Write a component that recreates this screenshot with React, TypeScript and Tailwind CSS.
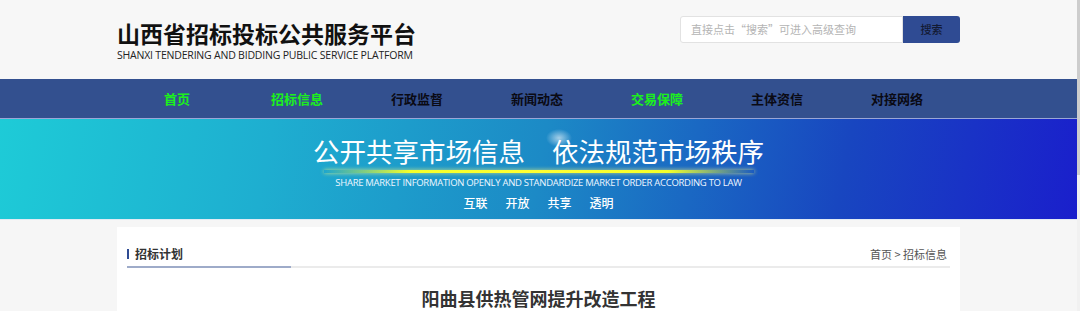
const navItems = [
  { label: '首页', active: true },
  { label: '招标信息', active: true },
  { label: '行政监督', active: false },
  { label: '新闻动态', active: false },
  { label: '交易保障', active: true },
  { label: '主体资信', active: false },
  { label: '对接网络', active: false },
];

const cjk = "font-['Noto_Sans_CJK_SC','Noto_Sans',sans-serif]";

export default function App() {
  return (
    <div className={`flex w-[1080px] h-[311px] overflow-hidden bg-[#f6f6f6] ${cjk}`}>
      <div className="flex-1 flex flex-col min-h-0">
        {/* header */}
        <header className="shrink-0 h-[79px] bg-[#f7f7f7]">
          <div className="w-[843px] mx-auto flex items-start justify-between">
            <div className="pt-[18px]">
              <h1 className="text-[23px] leading-[30px] font-bold text-[#111]">山西省招标投标公共服务平台</h1>
              <p className="text-[10.5px] leading-[12px] mt-[1px] text-[#222] font-['Open_Sans',sans-serif] tracking-[-0.2px] whitespace-nowrap">
                SHANXI TENDERING AND BIDDING PUBLIC SERVICE PLATFORM
              </p>
            </div>
            <div className="flex mt-[16px] h-[27px]">
              <div className="w-[223px] bg-white border border-[#e2e2e2] rounded-l-[3px] flex items-center pl-[10px] text-[11px] text-[#b4b4b4]">
                直接点击“搜索”可进入高级查询
              </div>
              <button className="w-[57px] bg-[#2f4b93] rounded-r-[3px] text-[11px] text-[#131a33] font-medium">搜索</button>
            </div>
          </div>
        </header>

        {/* nav */}
        <nav className="shrink-0 h-[40px] bg-[#33508f] border-b border-[#9aa6d6]">
          <div className="w-[843px] mx-auto flex h-full items-center">
            {navItems.map((n) => (
              <a
                key={n.label}
                className={`w-[120px] text-center text-[13px] font-bold ${n.active ? 'text-[#1cf01c]' : 'text-[#0a0a14]'}`}
              >
                {n.label}
              </a>
            ))}
          </div>
        </nav>

        {/* banner */}
        <section className="shrink-0 relative h-[101px] bg-[linear-gradient(100deg,#1ecbd7_0%,#1eaed0_25%,#1c8ac6_50%,#1846c0_78%,#1a1fcc_100%)] border-b border-[#e3ebf4] overflow-hidden">
          <div className="absolute left-[546px] top-[10px] w-[26px] h-[18px] rounded-full bg-[radial-gradient(closest-side,rgba(255,255,255,0.6),rgba(255,255,255,0))]" />
          <div className="relative flex flex-col items-center pt-[16px] text-white">
            <div className="text-[26.5px] leading-[32px] font-normal whitespace-nowrap">
              公开共享市场信息<span className="inline-block w-[27px]" />依法规范市场秩序
            </div>
            <div className="mt-[3px] h-[3px] w-[430px] bg-[linear-gradient(90deg,rgba(255,255,0,0)_0%,#f4ff2a_20%,#ffff33_50%,#f4ff2a_80%,rgba(255,255,0,0)_100%)] shadow-[0_0_4px_rgba(255,255,120,0.8)]" />
            <div className="mt-[4px] text-[9.5px] leading-[11px] font-['Open_Sans',sans-serif] tracking-[-0.3px] whitespace-nowrap text-[#eef6ff]">
              SHARE MARKET INFORMATION OPENLY AND STANDARDIZE MARKET ORDER ACCORDING TO LAW
            </div>
            <div className="mt-[8px] flex gap-[18px] text-[12px] leading-[14px] font-medium">
              <span>互联</span>
              <span>开放</span>
              <span>共享</span>
              <span>透明</span>
            </div>
          </div>
        </section>

        {/* content */}
        <main className="flex-1 min-h-0 pt-[7px]">
          <div className="w-[843px] mx-auto bg-white h-[200px] px-[10px]">
            <div className="flex items-end justify-between pt-[14px] h-[35px]">
              <div className="flex items-center gap-[4px]">
                <span className="w-[2px] h-[10px] bg-[#2f4b93]" />
                <span className="text-[12px] font-bold text-[#333] leading-[16px] ml-[2px]">招标计划</span>
              </div>
              <span className="text-[11px] text-[#555] leading-[16px] mr-[3px]">首页 &gt; 招标信息</span>
            </div>
            <div className="mt-[4px] h-[2px] bg-[#ebebeb] flex">
              <div className="w-[164px] bg-[#9eabc9]" />
            </div>
            <h2 className="mt-[18px] text-center text-[18px] font-bold text-[#333] leading-[24px]">阳曲县供热管网提升改造工程</h2>
          </div>
        </main>
      </div>

      {/* scrollbar */}
      <div className="w-[3px] flex flex-col bg-[#f1f1f1]">
        <div className="h-[175px] bg-[#cdcdcd]" />
      </div>
    </div>
  );
}
